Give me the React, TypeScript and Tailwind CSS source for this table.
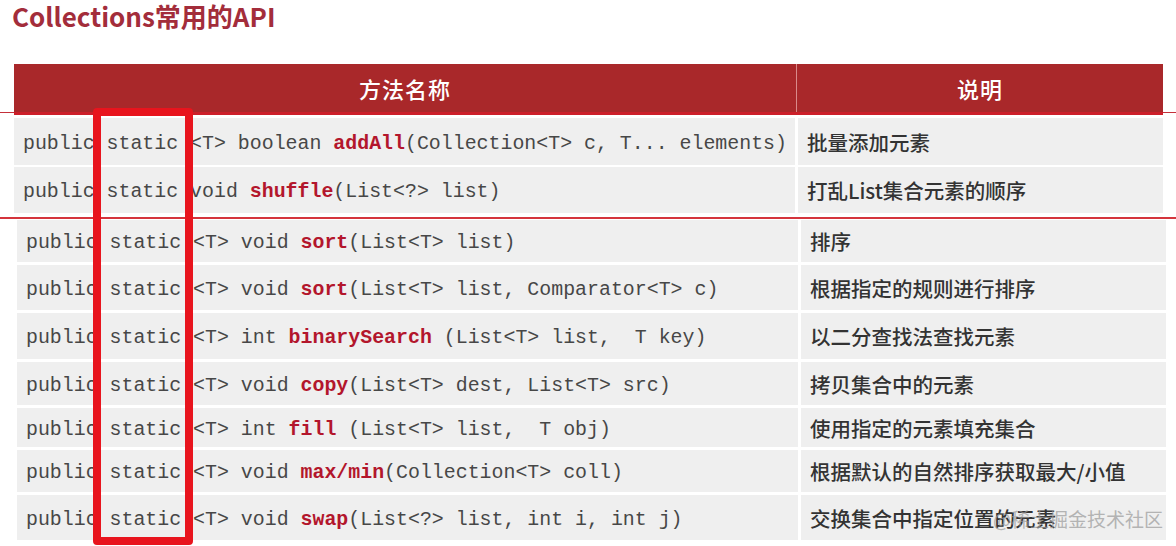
import React from "react";

type Row = { pre: string; name: string; post: string; desc: string; h: number };

const top: Row[] = [
  { pre: "public static <T> boolean ", name: "addAll", post: "(Collection<T> c, T... elements)", desc: "批量添加元素", h: 47 },
  { pre: "public static void ", name: "shuffle", post: "(List<?> list)", desc: "打乱List集合元素的顺序", h: 46 },
];

const bottom: Row[] = [
  { pre: "public static <T> void ", name: "sort", post: "(List<T> list)", desc: "排序", h: 42 },
  { pre: "public static <T> void ", name: "sort", post: "(List<T> list, Comparator<T> c)", desc: "根据指定的规则进行排序", h: 45 },
  { pre: "public static <T> int ", name: "binarySearch", post: " (List<T> list,  T key)", desc: "以二分查找法查找元素", h: 46 },
  { pre: "public static <T> void ", name: "copy", post: "(List<T> dest, List<T> src)", desc: "拷贝集合中的元素", h: 43 },
  { pre: "public static <T> int ", name: "fill", post: " (List<T> list,  T obj)", desc: "使用指定的元素填充集合", h: 39 },
  { pre: "public static <T> void ", name: "max/min", post: "(Collection<T> coll)", desc: "根据默认的自然排序获取最大/小值", h: 42 },
  { pre: "public static <T> void ", name: "swap", post: "(List<?> list, int i, int j)", desc: "交换集合中指定位置的元素", h: 45 },
];

const mono = { fontFamily: '"Liberation Mono", "DejaVu Sans Mono", monospace' };
const cjk = { fontFamily: '"Noto Sans CJK SC", "Noto Sans", sans-serif' };

function TableRow({ r, size }: { r: Row; size: string }) {
  return (
    <div className="flex gap-[3px]" style={{ height: r.h }}>
      <div className="w-[781px] bg-[#efefef] flex items-center pl-[9px] pt-[4px]">
        <span className={`${size} text-[#474747] whitespace-pre`} style={mono}>
          {r.pre}
          <span className="font-bold text-[#b3162c]">{r.name}</span>
          {r.post}
        </span>
      </div>
      <div className="flex-1 bg-[#efefef] flex items-center pl-[9px] pt-[1px]">
        <span className="text-[20.5px] text-[#333333] font-medium" style={cjk}>
          {r.desc}
        </span>
      </div>
    </div>
  );
}

export default function App() {
  return (
    <div className="w-[1176px] h-[546px] bg-white relative overflow-hidden">
      <div className="h-[64px] pl-[12px] pt-[1px]">
        <h1 className="text-[26px] font-bold text-[#a32d3b] leading-[30px]" style={cjk}>
          Collections常用的API
        </h1>
      </div>

      {/* header */}
      <div className="relative">
        <div className="absolute left-0 right-0 top-[48px] h-[1px] bg-[#c4303a]" />
        <div className="relative ml-[14px] w-[1149px] h-[51px] flex bg-[#a9282a] border-b-[3px] border-[#cc1f29]">
          <div className="w-[783px] flex items-center justify-center border-r border-[#d98a8a]">
            <span className="text-white text-[22px] font-medium tracking-[1px]" style={cjk}>方法名称</span>
          </div>
          <div className="flex-1 flex items-center justify-center">
            <span className="text-white text-[22px] font-medium tracking-[1px]" style={cjk}>说明</span>
          </div>
        </div>
      </div>

      {/* top rows */}
      <div className="ml-[14px] w-[1149px] pt-[3px] flex flex-col gap-[2px]">
        {top.map((r, i) => (
          <TableRow key={i} r={r} size="text-[19.9px]" />
        ))}
      </div>

      {/* separator line */}
      <div className="mt-[4px] h-[2px] bg-[#d4343c]" />

      {/* bottom rows */}
      <div className="ml-[17px] w-[1149px] pt-[1px] flex flex-col gap-[3px]">
        {bottom.map((r, i) => (
          <TableRow key={i} r={r} size="text-[19.9px]" />
        ))}
      </div>

      {/* highlight box */}
      <div className="absolute left-[93px] top-[108px] w-[100px] h-[437px] border-[8px] border-[#e8141d] rounded-[4px]" />

      {/* watermark */}
      <div className="absolute left-[993px] top-[505px] text-[19px] text-[#9a9a9a] opacity-70" style={cjk}>
        @稀土掘金技术社区
      </div>
    </div>
  );
}
